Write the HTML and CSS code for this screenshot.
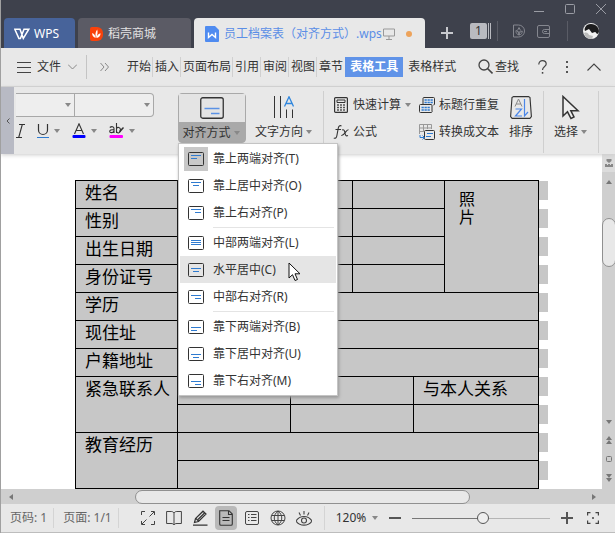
FILE: index.html
```html
<!DOCTYPE html>
<html lang="zh-CN">
<head>
  <meta charset="UTF-8">
  <meta name="viewport" content="width=device-width, initial-scale=1.0">
  <title>员工档案表（对齐方式）.wps</title>
  <link rel="stylesheet" href="styles.css">
</head>
<body>
  <!-- Shared icons -->
  <svg class="defs" aria-hidden="true">
    <symbol id="frame" viewBox="0 0 16 14"><rect x=".5" y=".5" width="15" height="13" rx="1" fill="none" stroke="#333" stroke-width="1"/></symbol>
    <symbol id="caret" viewBox="0 0 6 4"><path d="M0 0h6L3 4z" fill="#888"/></symbol>
  </svg>

  <header class="titlebar">
    <nav class="tabs">
      <a class="tab tab-wps" href="#">
        <svg width="16" height="12" viewBox="0 0 16 12"><path d="M.8 1.2H6L9.3 10.4 14.8 1.2H10L6.4 10.4 4.9 10.4zM.8 1.2 4.9 10.4" fill="none" stroke="#fff" stroke-width="1.5"/></svg>
        <span>WPS</span>
      </a>
      <a class="tab tab-store" href="#">
        <svg width="13" height="14" viewBox="0 0 13 14"><path d="M2 0h5a6 6 0 0 1 6 6v2a6 6 0 0 1-6 6H2a2 2 0 0 1-2-2V2a2 2 0 0 1 2-2z" fill="#f9420b"/><path d="M6 11C5 8 5.300 5 7.200 2.500 8 5 7.500 8 6 11zM5.500 11C3 10 2 8 2.200 6c2 .8 3.200 2.500 3.300 5zM6.500 11c.3-2.500 1.500-4 4-4.800.2 2.500-1.500 4.600-4 4.800z" fill="#fff"/></svg>
        <span>稻壳商城</span>
      </a>
      <a class="tab tab-active" href="#">
        <svg width="14" height="16" viewBox="0 0 14 16"><path d="M1 0h9l4 4v11a1 1 0 0 1-1 1H1a1 1 0 0 1-1-1V1a1 1 0 0 1 1-1z" fill="#4f8bf0"/><path d="M3.500 6.500v5L7 8.500l3.500 3v-5" fill="none" stroke="#fff" stroke-width="1.4"/></svg>
        <span class="file-name">员工档案表（对齐方式）.wps</span>
        <svg width="12" height="12" viewBox="0 0 12 12"><path d="M.5 1h11v7H.5zM6 8v3M3 11.500h6" fill="none" stroke="#999"/></svg>
        <i class="unsaved"></i>
      </a>
      <button class="new-tab" aria-label="新建"><svg width="12" height="12" viewBox="0 0 12 12"><path d="M6 0v12M0 6h12" stroke="#c8c9ce" stroke-width="2"/></svg></button>
    </nav>
    <div class="window-side">
      <div class="window-controls">
        <button aria-label="最小化"><svg width="10" height="10" viewBox="0 0 10 10"><path d="M0 7.500h10" stroke="#9a9ca4"/></svg></button>
        <button aria-label="最大化"><svg width="10" height="10" viewBox="0 0 10 10"><rect x=".5" y=".5" width="9" height="9" rx="1" fill="none" stroke="#9a9ca4"/></svg></button>
        <button aria-label="关闭"><svg width="10" height="10" viewBox="0 0 10 10"><path d="M0 0l10 10M10 0L0 10" stroke="#9a9ca4"/></svg></button>
      </div>
      <div class="account">
        <button class="tab-count"><span>1</span></button>
        <i class="sep-dark"></i>
        <button aria-label="稻壳"><svg width="12" height="14" viewBox="0 0 12 14"><path d="M.5 1h5a6 6 0 0 1 0 12h-5zM6 11V7M6 11C3 10 2.800 8 3 6.500 4.500 7 6 8.500 6 11zM6 11c2.500-.5 3.300-2 3.200-4C7.500 7.500 6 8.500 6 11zM4.500 6.500 6 3.500l1.500 3" fill="none" stroke="#85878f"/></svg></button>
        <button aria-label="钱包"><svg width="13" height="13" viewBox="0 0 13 13"><path d="M12.500 4V2a1.500 1.500 0 0 0-1.500-1.500H2A1.500 1.500 0 0 0 .5 2v9A1.500 1.500 0 0 0 2 12.500h9a1.500 1.500 0 0 0 1.500-1.500V9M12.500 4v5M12.500 4.500H7.500a2 2 0 0 0 0 4h5M7 6.500h3" fill="none" stroke="#85878f"/></svg></button>
        <i class="sep-dark sep-account"></i>
        <button aria-label="账号"><svg width="16" height="16" viewBox="0 0 16 16"><circle cx="8" cy="8" r="8" fill="#f2f2f2"/><path d="M4 2a8 8 0 0 1 12 6c0 1-1 3-2 3-1-1-1-2-2-2L9 10 6 6 2 8C1 6 2 4 4 2z" fill="#1c1c1e"/><path d="M1 10c3-1 4 0 5 2l4 1-1 3a8 8 0 0 1-8-6z" fill="#bbb"/></svg></button>
      </div>
    </div>
  </header>

  <nav class="menubar">
    <button class="file-menu">
      <svg width="14" height="11" viewBox="0 0 14 11"><path d="M0 .5h14M0 5.500h14M0 10.500h14" stroke="#444"/></svg>
      <span>文件</span>
      <svg width="9" height="6" viewBox="0 0 9 6"><path d="M0 .5l4.500 4.500L9 .5" fill="none" stroke="#888"/></svg>
    </button>
    <button class="more" aria-label="更多"><svg width="9" height="8" viewBox="0 0 9 8"><path d="M.5 0l3.500 4-3.500 4M5 0l3.500 4L5 8" fill="none" stroke="#888"/></svg></button>
    <ul class="menu-list">
      <li><a href="#">开始</a></li>
      <li><a href="#">插入</a></li>
      <li><a href="#">页面布局</a></li>
      <li><a href="#">引用</a></li>
      <li><a href="#">审阅</a></li>
      <li><a href="#">视图</a></li>
      <li><a href="#">章节</a></li>
      <li class="current"><a href="#">表格工具</a></li>
      <li><a href="#">表格样式</a></li>
    </ul>
    <div class="menu-tools">
      <button class="find">
        <svg width="15" height="16" viewBox="0 0 15 16"><circle cx="6" cy="6" r="5" fill="none" stroke="#444" stroke-width="1.3"/><path d="M9.500 9.500l5 5" stroke="#444" stroke-width="1.6"/></svg>
        <span>查找</span>
      </button>
      <button aria-label="帮助"><svg width="9" height="14" viewBox="0 0 9 14"><path d="M.8 4.500C.8 2 2.500.7 4.500.7s3.700 1.200 3.700 3.300C8.200 6.500 4.500 6.500 4.500 10" fill="none" stroke="#444" stroke-width="1.2"/><rect x="3.800" y="12" width="1.500" height="1.700" fill="#444"/></svg></button>
      <button aria-label="选项"><svg width="2" height="12" viewBox="0 0 2 12"><path d="M0 0h2v2H0zM0 5h2v2H0zM0 10h2v2H0z" fill="#555"/></svg></button>
      <button aria-label="折叠"><svg width="14" height="8" viewBox="0 0 14 8"><path d="M.5 7.500 7 1l6.500 6.500" fill="none" stroke="#444" stroke-width="1.1"/></svg></button>
    </div>
  </nav>

  <section class="ribbon">
    <button class="scroll-left" aria-label="向左"><svg width="4" height="6" viewBox="0 0 4 6"><path d="M3.500 0.500 1 3l2.500 2.500" fill="none" stroke="#555"/></svg></button>

    <div class="font-group">
      <div class="font-boxes">
        <label><select aria-label="字体"><option></option></select><svg width="6" height="4"><use href="#caret"/></svg></label>
        <label><select aria-label="字号"><option></option></select><svg width="6" height="4"><use href="#caret"/></svg></label>
      </div>
      <div class="font-buttons">
        <button aria-label="倾斜"><svg width="9" height="16" viewBox="0 0 9 16"><path d="M3 1.500h6M0 14.500h6M6.300 1.500 2.700 14.500" stroke="#333" stroke-width="1.1"/></svg></button>
        <button aria-label="下划线"><svg width="12" height="16" viewBox="0 0 12 16"><path d="M1.500 1v6a4.500 4.500 0 0 0 9 0V1" fill="none" stroke="#333" stroke-width="1.2"/><path d="M0 14.500h12" stroke="#2f7bd0"/></svg><svg width="6" height="4"><use href="#caret"/></svg></button>
        <button aria-label="字体颜色"><svg width="14" height="16" viewBox="0 0 14 16"><path d="M2.500 11 7 .8 11.500 11M4 7.500h6" fill="none" stroke="#333" stroke-width="1.1"/><rect x=".5" y="12" width="13" height="3" rx="1" fill="#00f"/></svg><svg width="6" height="4"><use href="#caret"/></svg></button>
        <button aria-label="突出显示"><svg width="15" height="16" viewBox="0 0 15 16"><path d="M.8 4.500C2.500 3.200 5 3.300 5 5.500V10M5 6.500C2 6.500.7 7 .7 8.400S4 10.500 5 8M7.500 0v10M7.500 5.500c1-1.700 4-1.500 4 1.500s-3 4-4 1.500" fill="none" stroke="#333" stroke-width="1.1"/><path d="M10 10l.5-2.500L14 4l1 1-3.500 4z" fill="#333"/><rect x=".5" y="12" width="13.500" height="3" rx="1" fill="#f0f"/></svg><svg width="6" height="4"><use href="#caret"/></svg></button>
      </div>
    </div>

    <div class="align-box">
      <button class="big-button align-button">
        <span class="align-icon"><svg width="24" height="22" viewBox="0 0 24 22"><rect x=".75" y=".75" width="22.500" height="20.500" rx="2" fill="none" stroke="#333" stroke-width="1.3"/><path d="M4.500 11.500h15M11 16.500h8.500" stroke="#5b92e5" stroke-width="1.4"/></svg></span>
        <span class="align-text">对齐方式<svg width="6" height="4"><use href="#caret"/></svg></span>
      </button>
      <div class="align-menu" role="menu">
        <button role="menuitem" class="checked"><svg viewBox="0 0 16 14"><use href="#frame"/><path d="M3 3.500h10M3 6.500h6"/></svg><span>靠上两端对齐(T)</span></button>
        <button role="menuitem"><svg viewBox="0 0 16 14"><use href="#frame"/><path d="M3 3.500h10M5 6.500h6"/></svg><span>靠上居中对齐(O)</span></button>
        <button role="menuitem"><svg viewBox="0 0 16 14"><use href="#frame"/><path d="M3 3.500h10M7 6.500h6"/></svg><span>靠上右对齐(P)</span></button>
        <hr>
        <button role="menuitem"><svg viewBox="0 0 16 14"><use href="#frame"/><path d="M3 4.500h10M3 6.500h10M3 8.500h10"/></svg><span>中部两端对齐(L)</span></button>
        <button role="menuitem" class="hover"><svg viewBox="0 0 16 14"><use href="#frame"/><path d="M3 5.500h10M5 8.500h6"/></svg><span>水平居中(C)</span></button>
        <button role="menuitem"><svg viewBox="0 0 16 14"><use href="#frame"/><path d="M3 5.500h10M7 8.500h6"/></svg><span>中部右对齐(R)</span></button>
        <hr>
        <button role="menuitem"><svg viewBox="0 0 16 14"><use href="#frame"/><path d="M3 7.500h10M3 10.500h6"/></svg><span>靠下两端对齐(B)</span></button>
        <button role="menuitem"><svg viewBox="0 0 16 14"><use href="#frame"/><path d="M3 7.500h10M5 10.500h6"/></svg><span>靠下居中对齐(U)</span></button>
        <button role="menuitem"><svg viewBox="0 0 16 14"><use href="#frame"/><path d="M3 7.500h10M7 10.500h6"/></svg><span>靠下右对齐(M)</span></button>
        <svg class="pointer" width="13" height="20" viewBox="0 0 13 20"><path d="M1 1v15l3.500-3.300L7 18.500l2.500-1-2.500-5.700h5z" fill="#fff" stroke="#111"/></svg>
      </div>
    </div>

    <button class="big-button direction">
      <svg width="20" height="22" viewBox="0 0 20 22"><path d="M.5 0v22M6.500 0v22M12.500 13.500V22M18.500 13.500V22" stroke="#333"/><path d="M10.500 10.500 15 .8l4.500 9.700M12 7.500h6" fill="none" stroke="#2f86dd" stroke-width="1.3"/></svg>
      <span>文字方向<svg width="6" height="4"><use href="#caret"/></svg></span>
    </button>

    <div class="stack calc">
      <button>
        <svg width="16" height="16" viewBox="0 0 16 16"><rect x="1.600" y=".6" width="12.800" height="14.800" rx="1" fill="none" stroke="#333" stroke-width="1.200"/><path d="M4 3h8v2.500H4z" fill="none" stroke="#333"/><path d="M4 8h2M7 8h2M10 8h2M4 10.500h2M7 10.500h2M10 10.500h2M4 13h2M7 13h2M10 13h2" stroke="#555" stroke-width="1.400"/></svg>
        <span>快速计算</span><svg width="6" height="4"><use href="#caret"/></svg>
      </button>
      <button>
        <svg width="16" height="16" viewBox="0 0 16 16"><path d="M8.500 2C6.500 1 5.500 2.500 5.200 4.500L3.800 12c-.4 2-1.500 2.700-3 2M2.500 5.500H8M9 6c2-.8 2.500.5 3 3s1 3.500 3 2.500M15.500 5.800C13 5.500 11.500 12 8.300 11.500" fill="none" stroke="#333" stroke-width="1.100"/></svg>
        <span>公式</span>
      </button>
    </div>

    <div class="stack convert">
      <button>
        <svg width="16" height="16" viewBox="0 0 16 16"><path d="M4 7.500V1.500a1 1 0 0 1 1-1h9.500a1 1 0 0 1 1 1V7a1 1 0 0 1-1 1M.5 14V8.500a1 1 0 0 1 1-1H12a1 1 0 0 1 1 1V14a1 1 0 0 1-1 1.500H1.500a1 1 0 0 1-1-1.500z" fill="none" stroke="#333"/><path d="M5.500 3h8.500M5.500 5.500h8.500M2.500 10.500h8.500M2.500 13h8.500" stroke="#2f7bd0" stroke-width="1.500" stroke-dasharray="2.300 .7"/></svg>
        <span>标题行重复</span>
      </button>
      <button>
        <svg width="16" height="16" viewBox="0 0 16 16"><path d="M.5 10V.5h12V5M.5 4h12M.5 7.500H5M4.500.5v7M8.500.5V5" fill="none" stroke="#999"/><rect x="5.500" y="6.500" width="10" height="9" rx="1" fill="#e8e8e8" stroke="#333"/><path d="M8 9.500h6M7 12.500h5M1 11v2.500h4M3.500 11.500l2 2-2 2" fill="none" stroke="#2f7bd0"/></svg>
        <span>转换成文本</span>
      </button>
    </div>

    <button class="big-button sort">
      <svg width="22" height="23" viewBox="0 0 22 23"><path d="M3.500.6h15l1.500 1 1.400 19-1.500 1.800H2.100L.6 20.600 2 1.600z" fill="none" stroke="#333" stroke-width="1.100"/><path d="M5 10.500 8.500 3l3.500 7.500M6.200 8h4.600" fill="none" stroke="#888"/><path d="M5.500 13h6L5.500 20h6.500M14.500 3v17l3.500-4" fill="none" stroke="#4b86e8" stroke-width="1.200"/></svg>
      <span>排序</span>
    </button>
    <button class="big-button select-tool">
      <svg width="18" height="25" viewBox="0 0 18 25"><path d="M1 1.500v19.500l4.500-4.200L9 23.500l3-1.500-3.200-6.300H16z" fill="#eee" stroke="#333" stroke-width="1.500"/></svg>
      <span>选择<svg width="6" height="4"><use href="#caret"/></svg></span>
    </button>
  </section>

  <div class="workspace">
    <div class="view">
      <main class="paper">
        <table class="record">
          <colgroup><col class="c1"><col class="c2"><col class="c3"><col class="c4"><col class="c5"><col class="c6"></colgroup>
          <tr><th>姓名</th><td colspan="2"></td><td colspan="2"></td><td class="photo" rowspan="4">照<br>片</td></tr>
          <tr><th>性别</th><td colspan="2"></td><td colspan="2"></td></tr>
          <tr><th>出生日期</th><td colspan="2"></td><td colspan="2"></td></tr>
          <tr><th>身份证号</th><td colspan="2"></td><td colspan="2"></td></tr>
          <tr><th>学历</th><td colspan="5"></td></tr>
          <tr><th>现住址</th><td colspan="5"></td></tr>
          <tr><th>户籍地址</th><td colspan="5"></td></tr>
          <tr><th rowspan="2">紧急联系人</th><td></td><td colspan="2"></td><td colspan="2">与本人关系</td></tr>
          <tr><td></td><td colspan="2"></td><td colspan="2"></td></tr>
          <tr><th rowspan="2">教育经历</th><td colspan="5"></td></tr>
          <tr><td colspan="5"></td></tr>
        </table>
        <!-- selected row end marks -->
        <div class="row-marks"><i></i><i></i><i></i><i></i><i></i><i></i><i></i><i></i><i></i><i></i><i></i></div>
      </main>
      <div class="hscroll">
        <svg width="4" height="6" viewBox="0 0 4 6"><path d="M4 0v6L0 3z" fill="#777"/></svg>
        <div class="hthumb"></div>
        <svg width="4" height="6" viewBox="0 0 4 6"><path d="M0 0v6l4-3z" fill="#777"/></svg>
      </div>
    </div>
    <div class="vscroll">
      <button class="ruler" aria-label="标尺"><svg width="8" height="8" viewBox="0 0 8 8"><path d="M1.500 0h5v2L4 4 1.500 2zM0 5h2v1h1V5h2v1h1V5h2v3H0z" fill="#888"/></svg></button>
      <svg width="6" height="4" viewBox="0 0 6 4"><path d="M3 0l3 4H0z" fill="#777"/></svg>
      <div class="vthumb"></div>
      <div class="page-jump">
        <svg width="6" height="4" viewBox="0 0 6 4"><path d="M0 0h6L3 4z" fill="#777"/></svg>
        <svg width="6" height="8" viewBox="0 0 6 8"><path d="M3 0l3 4H0zM3 4l3 4H0z" fill="#777"/></svg>
        <svg width="6" height="6" viewBox="0 0 6 6"><rect x=".5" y=".5" width="5" height="5" rx="1" fill="none" stroke="#777"/></svg>
        <svg width="6" height="8" viewBox="0 0 6 8"><path d="M0 0h6L3 4zM0 4h6L3 8z" fill="#777"/></svg>
      </div>
    </div>
  </div>

  <footer class="statusbar">
    <span class="status-text">页码: 1</span>
    <span class="status-text">页面: 1/1</span>
    <div class="view-buttons">
      <button aria-label="全屏"><svg width="16" height="16" viewBox="0 0 16 16"><path d="M1.500 5V1.500H5M11 1.500h3.500V5M14.500 11v3.500H11M5 14.500H1.500V11M14 2 9.500 6.500M2 14l4.500-4.500" fill="none" stroke="#444"/></svg></button>
      <button aria-label="阅读版式"><svg width="16" height="16" viewBox="0 0 16 16"><path d="M8 3C7 1.500 6 1.500 5 1.500H.6v12H5c1.500 0 2.300.3 3 1.500.7-1.200 1.500-1.500 3-1.500h4.400v-12H11c-1 0-2 0-3 1.500zM8 3v12" fill="none" stroke="#444"/></svg></button>
      <button aria-label="写作模式"><svg width="16" height="16" viewBox="0 0 16 16"><path d="M2.500 12.500l1-4L11 1.200 14 4 6.500 11.500zM4 8.500l2.500 2.700M6 9.500 12.500 3M1 15.200h14.500" fill="none" stroke="#333" stroke-width="1.200"/></svg></button>
      <button class="pressed" aria-label="页面视图"><svg width="16" height="16" viewBox="0 0 16 16"><path d="M2 .7h9l3.300 3.300v10a1.300 1.300 0 0 1-1.300 1.300H3A1.300 1.300 0 0 1 1.700 14V.7zM4.500 7.500h7M4.500 10.500h7M10.500 1v3.500h3.500" fill="none" stroke="#333" stroke-width="1.100"/></svg></button>
      <button aria-label="大纲"><svg width="16" height="16" viewBox="0 0 16 16"><rect x="1.500" y="1.500" width="13" height="13" rx="1.500" fill="none" stroke="#444"/><path d="M4 4.500h1.500M7 4.500h5.500M4 7.500h1.500M7 7.500h5.500M4 10.500h1.500M7 10.500h5.500" stroke="#444"/></svg></button>
      <button aria-label="Web 版式"><svg width="16" height="16" viewBox="0 0 16 16"><circle cx="8" cy="8" r="7" fill="none" stroke="#444"/><path d="M8 1v14M1.500 5.500h13M1.500 10.500h13M8 1c-5 4-5 10 0 14M8 1c5 4 5 10 0 14" fill="none" stroke="#444"/></svg></button>
      <button aria-label="护眼模式"><svg width="16" height="16" viewBox="0 0 16 16"><path d="M0 11c4-6 12-6 16 0-4 5.500-12 5.500-16 0zM8 4.500V1M4.500 5.500 3 2.500M11.500 5.500 13 2.500" fill="none" stroke="#444" stroke-width="1.100"/><circle cx="8" cy="10.500" r="2.500" fill="none" stroke="#444" stroke-width="1.100"/></svg></button>
    </div>
    <label class="zoom"><select aria-label="缩放比例"><option>120%</option></select><svg width="6" height="4"><use href="#caret"/></svg></label>
    <button aria-label="缩小"><svg width="12" height="12" viewBox="0 0 12 12"><path d="M0 6h12" stroke="#555" stroke-width="2"/></svg></button>
    <input class="zoom-slider" type="range" min="0" max="100" value="52" aria-label="缩放">
    <button aria-label="放大"><svg width="12" height="12" viewBox="0 0 12 12"><path d="M0 6h12M6 0v12" stroke="#555" stroke-width="2"/></svg></button>
    <button class="fit" aria-label="最佳显示比例"><svg width="12" height="12" viewBox="0 0 12 12"><path d="M.6 3.500V.6h2.900M8.500.6h2.900v2.900M11.400 8.500v2.900H8.500M3.500 11.400H.6V8.500" fill="none" stroke="#444" stroke-width="1.200"/><circle cx="6" cy="6" r="1" fill="#444"/></svg></button>
  </footer>
</body>
</html>
```

FILE: styles.css
```css
* {
  margin: 0;
  padding: 0;
  box-sizing: border-box;
}

body {
  display: flex;
  flex-direction: column;
  min-height: 100vh;
  border-left: 1px solid #a0a0a0;
  background-color: #bdbdbd;
  color: #333;
  font-family: "Noto Sans", "Noto Sans CJK SC", sans-serif;
  font-size: 12px;
  line-height: 16px;
  white-space: nowrap;
}

button, select {
  border: none;
  background: none;
  color: inherit;
  font: inherit;
}

button {
  display: flex;
  align-items: center;
}

select {
  appearance: none;
}

a {
  color: inherit;
  text-decoration: none;
}

svg {
  display: block;
  flex: none;
}

.defs {
  position: absolute;
  width: 0;
  height: 0;
}

/* Title bar */
.titlebar {
  display: flex;
  justify-content: space-between;
  height: 48px;
  background-color: #3e414c;
}

.tabs {
  display: flex;
  align-items: flex-end;
  gap: 3px;
  padding-left: 3px;
}

.tab {
  display: flex;
  align-items: center;
  height: 30px;
  padding: 2px 12px 0;
  border-radius: 4px 4px 0 0;
}

.tab-wps {
  gap: 4px;
  width: 71px;
  padding-left: 10px;
  background-color: #47639a;
  color: #fff;
}

.tab-store {
  gap: 5px;
  width: 113px;
  background-color: #5b5b65;
  color: #e2e2e2;
}

.tab-active {
  gap: 5px;
  width: 231px;
  padding: 2px 13px 0 11px;
  background-color: #e8e8e8;
  color: #5b8ee6;
}

.file-name {
  margin-right: -4px;
}

.unsaved {
  width: 6px;
  height: 6px;
  margin-left: auto;
  border-radius: 50%;
  background-color: #eda35b;
}

.new-tab {
  height: 30px;
  padding: 0 10px 0 13px;
}

.window-side {
  display: flex;
  flex-direction: column;
  justify-content: space-between;
  padding: 4px 9px 7px 0;
}

.window-controls {
  display: flex;
  justify-content: flex-end;
  gap: 21px;
}

.account {
  display: flex;
  align-items: center;
  gap: 12px;
  padding-right: 7px;
}

.tab-count {
  padding-right: 1px;
  border-right: 3px double #b9bac0;
  margin-right: -6px;
}

.tab-count span {
  width: 17px;
  border-radius: 2px;
  background-color: #b9bac0;
  color: #333;
}

.sep-dark {
  width: 1px;
  height: 20px;
  margin-right: 3px;
  background-color: #5a5c66;
}

.sep-account {
  margin: 0 3px 0 5px;
}

/* Menu bar */
.menubar {
  display: flex;
  align-items: center;
  height: 39px;
  border-bottom: 1px solid #d2d2d2;
  background-color: #e8e8e8;
}

.file-menu {
  gap: 7px;
  height: 24px;
  padding: 0 9px 0 16px;
  border-right: 1px solid #c4c4c4;
}

.file-menu span {
  margin-left: -1px;
}

.more {
  padding: 0 17px 0 13px;
}

.menu-list {
  display: flex;
  list-style: none;
}

.menu-list li {
  height: 20px;
  padding: 2px 1px;
  border-right: 1px solid #d0d0d0;
}

.menu-list li:nth-child(n+7) {
  border-right: none;
}

.menu-list li + li {
  padding-left: 2px;
}

.menu-list li + .current {
  padding: 2px 5px;
  margin: 0 3px 0 1px;
  background-color: #6093e8;
  color: #fff;
  font-weight: bold;
}

.menu-tools {
  display: flex;
  align-items: center;
  gap: 19px;
  margin-left: auto;
  padding-right: 14px;
}

.find {
  gap: 2px;
}

/* Ribbon */
.ribbon {
  position: relative;
  z-index: 1;
  display: flex;
  height: 67px;
  background-color: #e8e8e8;
  box-shadow: 0 1px 4px #ccc;
}

.scroll-left {
  justify-content: center;
  width: 13px;
  background-color: #b8bac4;
}

.font-group {
  width: 140px;
  padding: 6px 0 0 2px;
}

.font-boxes {
  display: flex;
  height: 24px;
  border: 1px solid #a8a8a8;
  border-left: none;
  border-radius: 0 4px 4px 0;
  background-color: #eee;
}

.font-boxes label {
  display: flex;
  align-items: center;
  flex: 1;
  padding-right: 3px;
}

.font-boxes label:first-child {
  flex: none;
  width: 59px;
  border-right: 1px solid #a8a8a8;
}

.font-boxes select {
  flex: 1;
  min-width: 0;
}

.font-buttons {
  display: flex;
  gap: 12px;
  padding-top: 6px;
}

.font-buttons button {
  gap: 5px;
}

/* Text alignment button and its menu */
.big-button {
  flex-direction: column;
  justify-content: space-between;
  height: 56px;
  padding: 9px 0 3px;
}

.big-button span {
  display: flex;
  align-items: center;
  gap: 3px;
}

.align-box {
  position: relative;
  margin: 6px 0 0 24px;
}

.align-button {
  height: 50px;
  width: 68px;
  padding: 0;
  border: 1px solid #a9a9a9;
  border-radius: 4px;
  background-color: #a9a9a9;
}

.align-button .align-icon {
  justify-content: center;
  width: 100%;
  height: 28px;
  background-color: #e4e4e4;
}

.align-button .align-text {
  padding: 3px 2px 1px 0;
}

.align-menu {
  position: absolute;
  top: 50px;
  left: 0;
  width: 160px;
  padding: 1px;
  border: 1px solid #c4c4c4;
  background-color: #fff;
  box-shadow: 1px 2px 3px #999;
}

.align-menu button {
  gap: 5px;
  width: 100%;
  height: 27px;
  padding-left: 4px;
}

.align-menu button svg {
  box-sizing: content-box;
  width: 16px;
  height: 14px;
  padding: 5px 4px;
  fill: none;
  stroke: #2f7bd0;
}

.align-menu .checked svg {
  background-color: #c8c8c8;
}

.align-menu .hover {
  background-color: #e5e5e5;
}

.align-menu hr {
  margin: 1px 2px 1px 33px;
  border: none;
  border-top: 1px solid #e4e4e4;
}

.pointer {
  position: absolute;
  top: 118px;
  left: 109px;
}

.direction {
  padding-left: 9px;
}

.stack {
  display: flex;
  flex-direction: column;
  gap: 11px;
  padding-top: 10px;
}

.stack button {
  gap: 4px;
}

.calc {
  margin: 4px 0 0 11px;
  padding: 6px 0 0 9px;
  border-left: 1px solid #cfcfcf;
}

.convert {
  padding-left: 8px;
}

.sort {
  margin-left: 10px;
}

.select-tool {
  height: 62px;
  margin: 4px 0 0 10px;
  padding: 4px 11px 13px 10px;
  border: solid #cfcfcf;
  border-width: 0 1px;
}

/* Document */
.workspace {
  display: flex;
  flex: 1;
}

.view {
  display: flex;
  flex-direction: column;
  flex: 1;
}

.paper {
  display: flex;
  flex: 1;
  padding: 26px 54px 0 74px;
  background-color: #fff;
}

.record {
  flex: 1;
  table-layout: fixed;
  width: 100%;
  border-collapse: collapse;
  background-color: #c7c7c7;
  color: #000;
  font-size: 17px;
  line-height: 24px;
}

.record th, .record td {
  height: 28px;
  padding-left: 9px;
  border: 1px solid #000;
  font-weight: normal;
  text-align: left;
  vertical-align: top;
}

.record .photo {
  padding: 9px 0 0 14px;
  font-size: 16px;
  line-height: 18px;
}

.c1 { width: 102px; }
.c2 { width: 113px; }
.c3 { width: 62px; }
.c4 { width: 61px; }
.c5 { width: 31px; }
.c6 { width: 94px; }

.row-marks {
  display: flex;
  flex-direction: column;
  gap: 9px;
  width: 9px;
  padding-top: 1px;
}

.row-marks i {
  height: 19px;
  background-color: #c7c7c7;
}

/* Scroll bars */
.hscroll {
  display: flex;
  align-items: center;
  justify-content: space-between;
  height: 15px;
  padding: 0 6px 0 8px;
  background-color: #cfcfcf;
}

.hthumb {
  width: 57%;
  height: 14px;
  border: 1px solid #909090;
  border-radius: 7px;
  background-color: #e8e8e8;
}

.vscroll {
  display: flex;
  flex-direction: column;
  align-items: center;
  width: 14px;
  background-color: #cfcfcf;
}

.ruler {
  justify-content: center;
  width: 14px;
  height: 18px;
  margin-bottom: 8px;
  background-color: #dcdcdc;
}

.vthumb {
  width: 14px;
  height: 49px;
  margin-top: 34px;
  border: 1px solid #909090;
  border-radius: 7px;
  background-color: #e8e8e8;
}

.page-jump {
  display: flex;
  flex-direction: column;
  align-items: center;
  gap: 12px;
  margin-top: auto;
  padding-bottom: 22px;
}

/* Status bar */
.statusbar {
  display: flex;
  align-items: center;
  height: 28px;
  margin-bottom: 2px;
  background-color: #e8e8e8;
}

.status-text {
  padding: 2px 6px 2px 9px;
  border-right: 1px solid #d4d4d4;
  color: #666;
}

.view-buttons {
  display: flex;
  gap: 4px;
  padding: 0 9px 0 18px;
  border-right: 1px solid #d4d4d4;
}

.view-buttons button {
  justify-content: center;
  width: 22px;
  height: 24px;
  border-radius: 4px;
}

.view-buttons .pressed {
  background-color: #b9b9b9;
}

.zoom {
  display: flex;
  align-items: center;
  gap: 5px;
  padding: 0 11px;
}

.zoom-slider {
  flex: 1;
  min-width: 0;
  height: 14px;
  margin: 0 11px;
  appearance: none;
  background: linear-gradient(to right, #777 52%, #b5b5b5 52%) center / 100% 1px no-repeat;
}

.zoom-slider::-webkit-slider-thumb {
  appearance: none;
  width: 12px;
  height: 12px;
  border: 1px solid #555;
  border-radius: 50%;
  background-color: #eee;
}

.fit {
  padding: 0 16px 0 14px;
}
```
